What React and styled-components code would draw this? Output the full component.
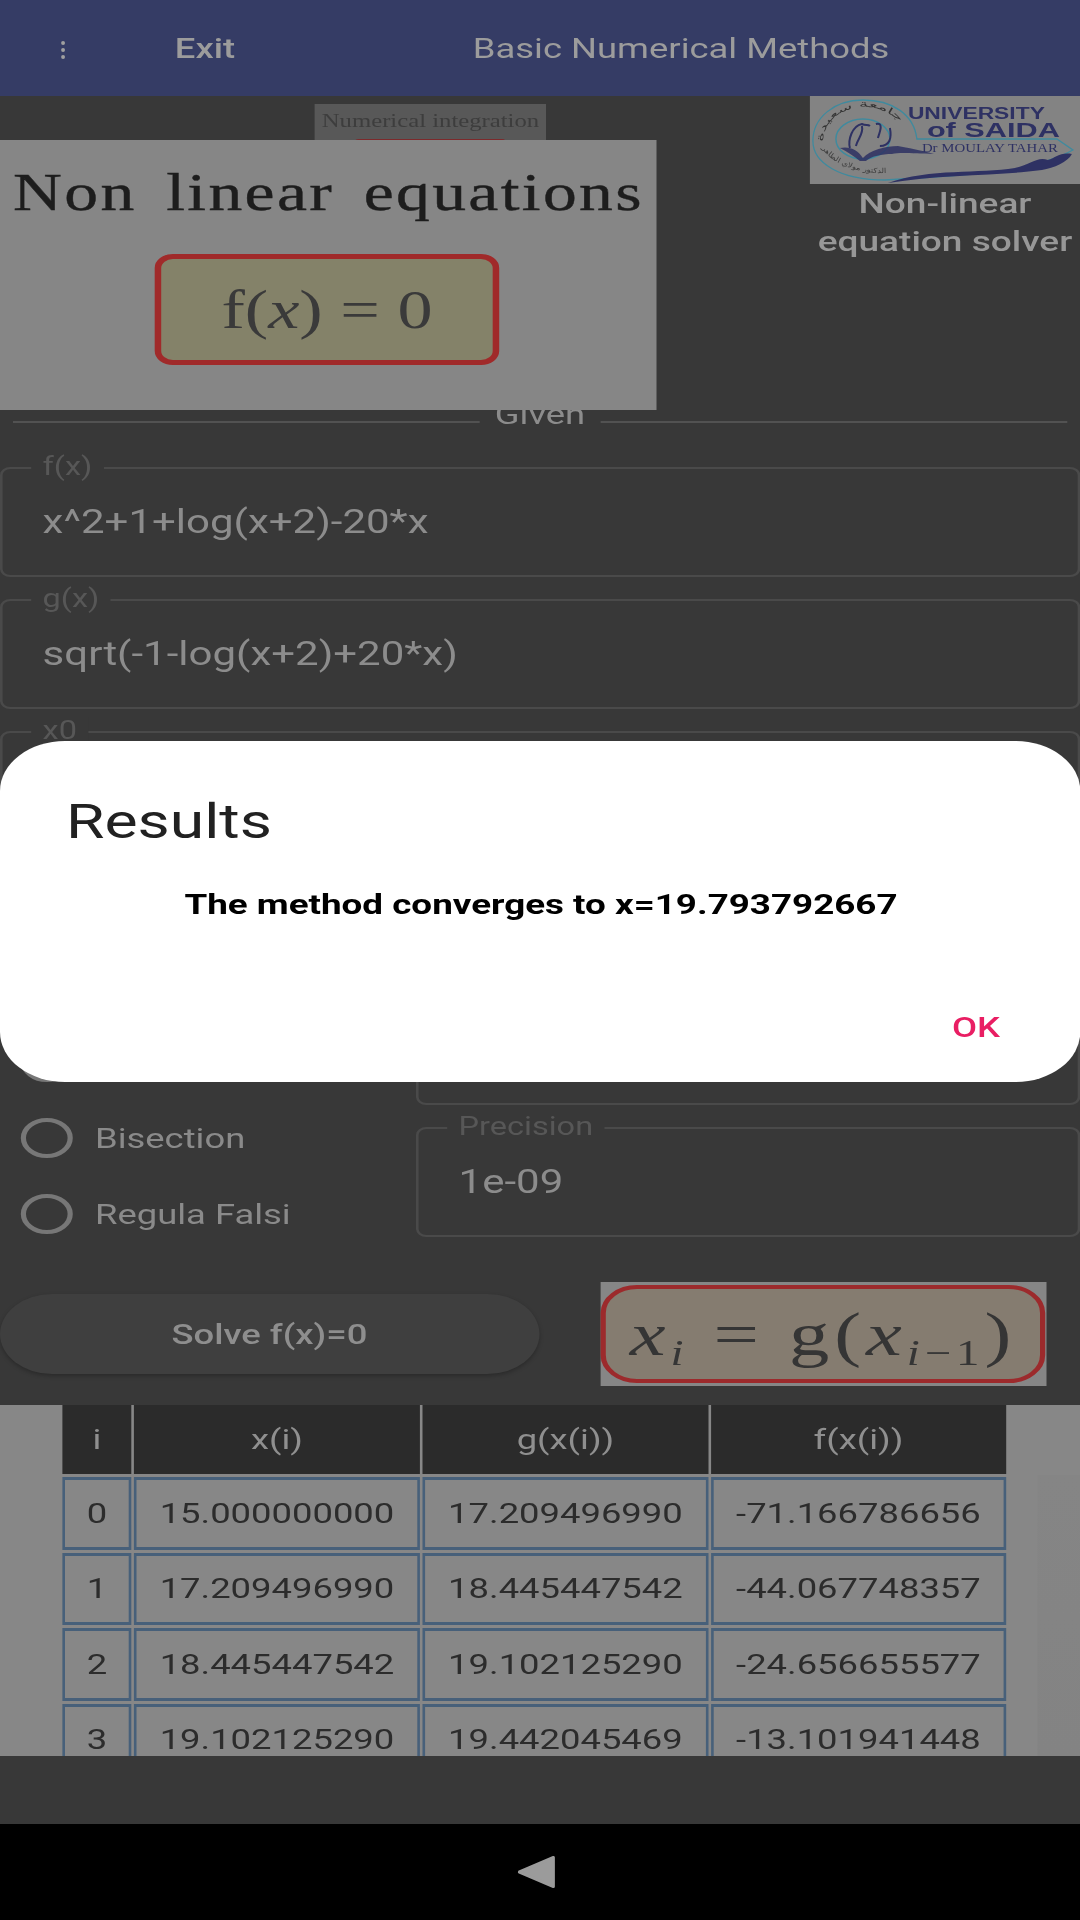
import React from "react";
import styled, { createGlobalStyle } from "styled-components";

// the whole capture is stretched sideways, so the page is laid out narrow and scaled
const STRETCH = 1.3;
const sx = (px) => `${(px / STRETCH).toFixed(2)}px`;

const GlobalStyle = createGlobalStyle`
  html, body {
    margin: 0;
    padding: 0;
    background: #383838;
    overflow: hidden;
  }
  * { box-sizing: border-box; }
`;

const Screen = styled.div`
  position: relative;
  width: ${sx(1080)};
  height: 1920px;
  display: flex;
  flex-direction: column;
  background: #383838;
  font-family: Roboto, "Liberation Sans", sans-serif;
  transform: scaleX(${STRETCH});
  transform-origin: 0 0;
  overflow: hidden;
`;

const AppBar = styled.header`
  flex: none;
  height: 96px;
  display: flex;
  align-items: center;
  padding-left: ${sx(61)};
  background: #353c65;
  color: #9c9c9c;
  font-size: 28px;
`;

const MenuDots = styled.div`
  display: flex;
  flex-direction: column;
  gap: 3px;
  width: 3px;
  margin-top: 4px;
  span {
    width: 3px;
    height: 4px;
    border-radius: 50%;
    background: #a0a0a0;
  }
`;

const ExitLabel = styled.div`
  margin-left: ${sx(110)};
  width: ${sx(298)};
  font-weight: 500;
`;

const BarTitle = styled.div`
  font-size: 28px;
`;

const TopRow = styled.section`
  flex: none;
  height: 302px;
  display: flex;
`;

const TopLeft = styled.div`
  position: relative;
  flex: 1;
`;

const SmallSheet = styled.div`
  width: ${sx(231)};
  height: 120px;
  margin: 8px 0 0 ${sx(315)};
  padding-top: 6px;
  background: #585858;
  color: #3d3d3d;
  font-family: "Liberation Serif", serif;
  font-size: 19px;
  line-height: 22px;
  text-align: center;
  white-space: nowrap;
`;

const SmallBox = styled.div`
  width: ${sx(154)};
  height: 60px;
  margin: 7px auto 0;
  border: 2px solid #7c2a2c;
  border-radius: 4px;
  background: #848269;
`;

const BigSheet = styled.div`
  position: absolute;
  z-index: 2;
  left: 0;
  top: 44px;
  width: ${sx(657)};
  height: 270px;
  display: flex;
  flex-direction: column;
  align-items: center;
  padding-top: 25px;
  background: #868686;
  color: #1d1d1d;
  font-family: "Liberation Serif", serif;
`;

const SheetHeading = styled.div`
  font-size: 52px;
  line-height: 56px;
  letter-spacing: 1.8px;
  word-spacing: 8px;
  white-space: nowrap;
  -webkit-text-stroke: 0.4px #1d1d1d;
`;

const FormulaBox = styled.div`
  width: ${sx(345)};
  height: 111px;
  margin: 33px ${sx(3)} 0 0;
  display: flex;
  align-items: center;
  justify-content: center;
  border: 5px solid #a02a2a;
  border-radius: 14px;
  background: #848269;
  color: #3a3a3a;
  font-size: 54px;
  white-space: nowrap;
`;

const MathVar = styled.i`
  font-style: italic;
`;

const TopRight = styled.div`
  flex: none;
  width: ${sx(270)};
`;

const LogoFrame = styled.div`
  height: 88px;
  background: #838383;
  filter: blur(0.5px);
  svg {
    display: block;
    width: 100%;
    height: 100%;
  }
`;

const SolverTitle = styled.div`
  padding-top: 1px;
  color: #979797;
  font-size: 28.5px;
  font-weight: 500;
  line-height: 38px;
  text-align: center;
  white-space: nowrap;
`;

const GivenRow = styled.div`
  flex: none;
  height: 33px;
  display: flex;
  align-items: center;
  padding: 0 ${sx(13)};
  color: #8c8c8c;
  font-size: 28px;
  line-height: 33px;
`;

const GivenLine = styled.div`
  flex: 1;
  height: 2px;
  margin-top: 14px;
  background: #525252;
`;

const GivenText = styled.div`
  padding: 0 ${sx(15)};
`;

const Fields = styled.div`
  flex: none;
  display: flex;
  flex-direction: column;
  gap: 22px;
  margin-top: 36px;
`;

const FieldBox = styled.div`
  position: relative;
  height: 110px;
  display: flex;
  align-items: center;
  padding-left: ${sx(40)};
  border: 2px solid #4a4a4a;
  border-radius: 8px;
  color: #8c8c8c;
  font-size: 32.3px;
`;

const FieldLabel = styled.span`
  position: absolute;
  left: ${sx(29)};
  top: -16px;
  padding: 0 ${sx(11)};
  background: #383838;
  color: #575757;
  font-size: 25px;
  line-height: 28px;
`;

const MethodRow = styled.div`
  display: flex;
`;

const RadioColumn = styled.div`
  flex: none;
  width: ${sx(416)};
  display: flex;
  flex-direction: column;
  gap: 36px;
  padding: 103px 0 0 ${sx(21)};
`;

const RadioRow = styled.div`
  height: 40px;
  display: flex;
  align-items: center;
  gap: ${sx(22)};
  color: #8a8a8a;
  font-size: 28px;
`;

const RadioMark = styled.span`
  flex: none;
  width: 40px;
  height: 40px;
  border: 4px solid #777;
  border-radius: 50%;
`;

const SideFields = styled.div`
  flex: 1;
  display: flex;
  flex-direction: column;
  gap: 22px;
`;

const ActionRow = styled.div`
  flex: none;
  height: 104px;
  margin-top: 45px;
  display: flex;
  align-items: center;
`;

const SolveButton = styled.button`
  width: ${sx(539)};
  height: 80px;
  border: 0;
  border-radius: 40px;
  background: #3f3f3f;
  box-shadow: 0 2px 4px rgba(0, 0, 0, 0.25);
  color: #8e8e8e;
  font-family: inherit;
  font-size: 28px;
  font-weight: 500;
`;

const IterationSheet = styled.div`
  width: ${sx(446)};
  height: 104px;
  padding: 3px ${sx(1)};
  margin-left: ${sx(61)};
  background: #868686;
`;

const IterationBox = styled.div`
  height: 98px;
  display: flex;
  align-items: center;
  justify-content: center;
  border: 4px solid #9c2a2c;
  border-radius: 28px;
  background: #857c70;
  color: #353535;
  font-family: "Liberation Serif", serif;
  font-size: 62px;
  letter-spacing: 3.8px;
  white-space: nowrap;
  sub {
    font-size: 36px;
    line-height: 0;
    vertical-align: -10px;
  }
`;

const TablePanel = styled.section`
  flex: none;
  height: 351px;
  margin-top: 19px;
  display: flex;
  background: #878787;
  overflow: hidden;
`;

const DataTable = styled.div`
  flex: none;
  width: ${sx(943)};
  margin-left: ${sx(63)};
  display: flex;
  flex-direction: column;
  gap: 3px;
`;

const TableRow = styled.div`
  flex: none;
  display: grid;
  grid-template-columns: ${sx(68)} ${sx(286)} ${sx(285)} 1fr;
  column-gap: ${sx(3)};
`;

const HeadCell = styled.div`
  height: 69px;
  display: flex;
  align-items: center;
  justify-content: center;
  background: #2b2b2b;
  color: #8f8f8f;
  font-size: 28px;
`;

const BodyCell = styled.div`
  height: 72.5px;
  display: flex;
  align-items: center;
  justify-content: center;
  border: 3px solid #47607a;
  border-width: 3px 2.4px;
  color: #2c2c2c;
  font-size: 28px;
`;

const ScrollTrack = styled.div`
  flex: none;
  width: ${sx(42)};
  margin: 70px 0 0 ${sx(32)};
  background: linear-gradient(#858585, #838383);
`;

const BottomGap = styled.div`
  flex: 1;
`;

const NavBar = styled.nav`
  flex: none;
  height: 96px;
  display: flex;
  align-items: center;
  justify-content: center;
  padding-right: ${sx(6)};
  background: #000;
  svg {
    width: ${sx(38)};
    height: 32px;
  }
`;

const Dialog = styled.div`
  position: absolute;
  z-index: 5;
  left: 0;
  right: 0;
  top: 741px;
  height: 341px;
  display: flex;
  flex-direction: column;
  padding: 54px ${sx(80)} 37px ${sx(66)};
  border-radius: 50px;
  background: #fff;
`;

const DialogTitle = styled.div`
  color: #212121;
  font-size: 48px;
  line-height: 54px;
`;

const DialogMessage = styled.div`
  margin: 39px 0 0 ${sx(16)};
  color: #000;
  font-size: 28.3px;
  font-weight: 700;
  line-height: 34px;
  text-align: center;
`;

const DialogAction = styled.div`
  margin-top: auto;
  color: #e91e63;
  font-size: 28px;
  font-weight: 500;
  line-height: 34px;
  text-align: right;
`;

const rows = [
  ["0", "15.000000000", "17.209496990", "-71.166786656"],
  ["1", "17.209496990", "18.445447542", "-44.067748357"],
  ["2", "18.445447542", "19.102125290", "-24.656655577"],
  ["3", "19.102125290", "19.442045469", "-13.101941448"],
];

const SaidaLogo = () => (
  <svg viewBox="0 0 270 88" preserveAspectRatio="none">
    <path
      d="M107 43 C104 18 82 4 53 4 C24 4 3 22 3 45 C3 67 30 84 75 84 C110 82 170 78 203 74 C225 68 245 64 263 54 L247 43 Z"
      fill="none"
      stroke="#3f8a9e"
      strokeWidth="1.3"
    />
    <ellipse cx="53" cy="43" rx="27" ry="20" fill="none" stroke="#3f8a9e" strokeWidth="1.5" />
    <path
      d="M78 87 C120 72 170 78 205 72 C222 68 228 60 238 64 C246 62 250 56 262 58 C258 66 244 72 232 74 C190 80 130 78 78 87Z"
      fill="#2e3163"
    />
    <path
      d="M30 52 C40 50 48 54 53 62 C60 54 76 50 88 50 C98 52 110 54 124 58 C105 58 92 56 82 58 C72 58 62 60 56 65 L50 65 C44 60 38 56 30 52Z"
      fill="#2e3163"
      opacity="0.85"
    />
    <path
      d="M40 52 C38 44 42 30 52 28 C56 30 58 28 60 30 M46 50 C48 42 54 38 52 30 M66 28 C74 26 70 36 68 42 M70 50 C80 50 82 42 80 32"
      fill="none"
      stroke="#2e3163"
      strokeWidth="2"
    />
    <path id="logoRingTop" d="M13 46 C13 26 32 11 55 11 C74 11 90 22 97 38" fill="none" />
    <path id="logoRingLow" d="M12 52 C20 66 46 78 76 77" fill="none" />
    <text fontFamily="'DejaVu Sans', sans-serif" fontSize="9" fill="#333">
      <textPath href="#logoRingTop" textLength="100" lengthAdjust="spacingAndGlyphs">
        جامعة سعيدة
      </textPath>
    </text>
    <text fontFamily="'DejaVu Sans', sans-serif" fontSize="7" fill="#3a3a3a">
      <textPath href="#logoRingLow" textLength="72" lengthAdjust="spacingAndGlyphs">
        الدكتور مولاي الطاهر
      </textPath>
    </text>
    <g fill="#2e3163" fontFamily="'Liberation Sans', sans-serif" fontWeight="700">
      <text x="98" y="23" fontSize="17" textLength="137" lengthAdjust="spacingAndGlyphs">
        UNIVERSITY
      </text>
      <text x="117" y="41" fontSize="21" textLength="133" lengthAdjust="spacingAndGlyphs">
        of SAIDA
      </text>
    </g>
    <text
      x="112"
      y="56"
      fill="#2e3163"
      fontFamily="'Liberation Serif', serif"
      fontSize="12"
      textLength="136"
      lengthAdjust="spacingAndGlyphs"
    >
      Dr MOULAY TAHAR
    </text>
  </svg>
);

const Field = ({ label, value }) => (
  <FieldBox>
    <FieldLabel>{label}</FieldLabel>
    {value}
  </FieldBox>
);

const Radio = ({ label }) => (
  <RadioRow>
    <RadioMark />
    {label}
  </RadioRow>
);

export default function App() {
  return (
    <>
      <GlobalStyle />
      <Screen>
        <AppBar>
          <MenuDots>
            <span />
            <span />
            <span />
          </MenuDots>
          <ExitLabel>Exit</ExitLabel>
          <BarTitle>Basic Numerical Methods</BarTitle>
        </AppBar>

        <TopRow>
          <TopLeft>
            <SmallSheet>
              Numerical integration
              <SmallBox />
            </SmallSheet>
            <BigSheet>
              <SheetHeading>Non linear equations</SheetHeading>
              <FormulaBox>
                <span>
                  f(<MathVar>x</MathVar>) = 0
                </span>
              </FormulaBox>
            </BigSheet>
          </TopLeft>
          <TopRight>
            <LogoFrame>
              <SaidaLogo />
            </LogoFrame>
            <SolverTitle>
              Non-linear
              <br />
              equation solver
            </SolverTitle>
          </TopRight>
        </TopRow>

        <GivenRow>
          <GivenLine />
          <GivenText>Given</GivenText>
          <GivenLine />
        </GivenRow>

        <Fields>
          <Field label="f(x)" value="x^2+1+log(x+2)-20*x" />
          <Field label="g(x)" value="sqrt(-1-log(x+2)+20*x)" />
          <Field label="x0" value="15" />
          <MethodRow>
            <RadioColumn>
              <Radio label="Fixed point" />
              <Radio label="Newton" />
              <Radio label="Bisection" />
              <Radio label="Regula Falsi" />
            </RadioColumn>
            <SideFields>
              <Field label="a" value="" />
              <Field label="b" value="" />
              <Field label="Precision" value="1e-09" />
            </SideFields>
          </MethodRow>
        </Fields>

        <ActionRow>
          <SolveButton>Solve f(x)=0</SolveButton>
          <IterationSheet>
            <IterationBox>
              <span>
                <MathVar>x</MathVar>
                <sub>
                  <MathVar>i</MathVar>
                </sub>
                &nbsp;=&nbsp;g(<MathVar>x</MathVar>
                <sub>
                  <MathVar>i</MathVar>−1
                </sub>
                )
              </span>
            </IterationBox>
          </IterationSheet>
        </ActionRow>

        <TablePanel>
          <DataTable>
            <TableRow>
              <HeadCell>i</HeadCell>
              <HeadCell>x(i)</HeadCell>
              <HeadCell>g(x(i))</HeadCell>
              <HeadCell>f(x(i))</HeadCell>
            </TableRow>
            {rows.map((row) => (
              <TableRow key={row[0]}>
                {row.map((cell, idx) => (
                  <BodyCell key={idx}>{cell}</BodyCell>
                ))}
              </TableRow>
            ))}
          </DataTable>
          <ScrollTrack />
        </TablePanel>

        <BottomGap />

        <NavBar>
          <svg viewBox="0 0 38 32" preserveAspectRatio="none">
            <path d="M2 16 L36 1.5 V30.5 Z" fill="#9b9b9b" stroke="#9b9b9b" strokeWidth="3" strokeLinejoin="round" />
          </svg>
        </NavBar>

        <Dialog>
          <DialogTitle>Results</DialogTitle>
          <DialogMessage>The method converges to x=19.793792667</DialogMessage>
          <DialogAction>OK</DialogAction>
        </Dialog>
      </Screen>
    </>
  );
}
